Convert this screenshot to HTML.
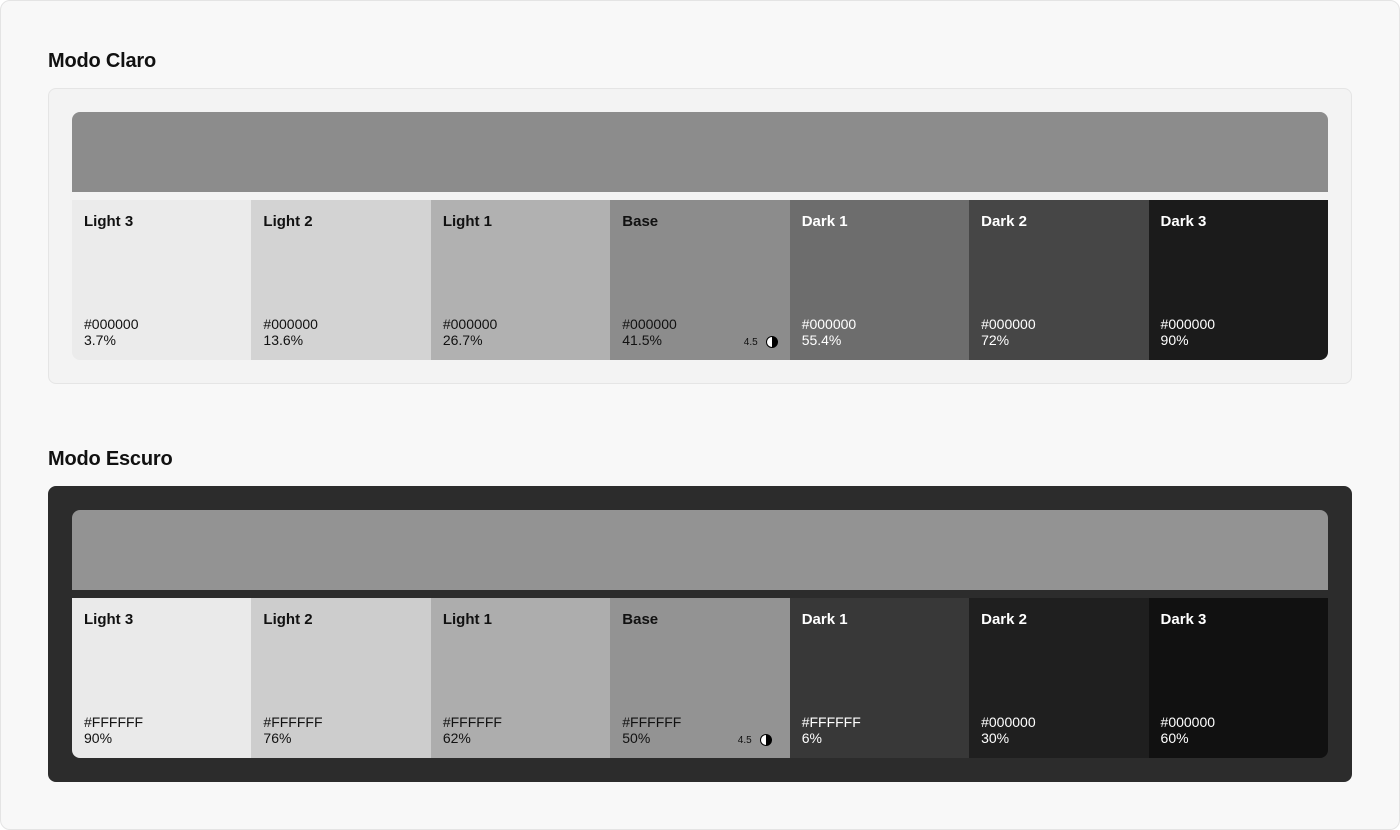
<!DOCTYPE html>
<html><head><meta charset="utf-8"><style>
*{box-sizing:border-box;margin:0;padding:0}
body{width:1400px;height:830px;background:#fff;font-family:"Liberation Sans",sans-serif;overflow:hidden;position:relative}
.frame{position:absolute;left:0;top:0;width:1400px;height:830px;background:#f8f8f8;border:1px solid #e4e4e4;border-radius:10px}
h2{position:absolute;left:48px;font-size:20px;font-weight:600;color:#111;letter-spacing:-0.2px}
.panel{position:absolute;left:48px;width:1304px;height:296px;border-radius:8px;padding:23px}
.light{top:88px;background:#f3f3f3;border:1px solid #e5e5e5}
.dark{top:486px;background:#2c2c2c;border:1px solid #2c2c2c}
.bar{height:80px;border-radius:8px 8px 0 0}
.row{display:flex;margin-top:8px;height:160px;border-radius:0 0 8px 8px;overflow:hidden}
.sw{flex:1;position:relative;padding:12px}
.lb{font-size:15px;font-weight:600;position:absolute;left:12px;top:13px}
.hx{position:absolute;left:12px;top:116px;font-size:14px;line-height:16px}
.ct{position:absolute;right:12px;top:136px;font-size:10px;display:flex;align-items:center;gap:8px}
.ic{width:12px;height:12px;border-radius:50%;border:1.5px solid #000;background:linear-gradient(90deg,#fff 50%,#000 50%)}
.w{color:#fff}.b{color:#111}
</style></head><body><div class="frame"></div>
<h2 style="top:50px">Modo Claro</h2>
<div class="panel light">
<div class="bar" style="background:#8c8c8c"></div>
<div class="row">
<div class="sw b" style="background:#ebebeb"><div class="lb">Light 3</div><div class="hx">#000000<br>3.7%</div></div>
<div class="sw b" style="background:#d3d3d3"><div class="lb">Light 2</div><div class="hx">#000000<br>13.6%</div></div>
<div class="sw b" style="background:#b1b1b1"><div class="lb">Light 1</div><div class="hx">#000000<br>26.7%</div></div>
<div class="sw b" style="background:#8c8c8c"><div class="lb">Base</div><div class="hx">#000000<br>41.5%</div><div class="ct">4.5 <span class="ic"></span></div></div>
<div class="sw w" style="background:#6d6d6d"><div class="lb">Dark 1</div><div class="hx">#000000<br>55.4%</div></div>
<div class="sw w" style="background:#464646"><div class="lb">Dark 2</div><div class="hx">#000000<br>72%</div></div>
<div class="sw w" style="background:#1b1b1b"><div class="lb">Dark 3</div><div class="hx">#000000<br>90%</div></div>
</div></div>
<h2 style="top:448px">Modo Escuro</h2>
<div class="panel dark">
<div class="bar" style="background:#939393"></div>
<div class="row">
<div class="sw b" style="background:#eaeaea"><div class="lb">Light 3</div><div class="hx">#FFFFFF<br>90%</div></div>
<div class="sw b" style="background:#cdcdcd"><div class="lb">Light 2</div><div class="hx">#FFFFFF<br>76%</div></div>
<div class="sw b" style="background:#adadad"><div class="lb">Light 1</div><div class="hx">#FFFFFF<br>62%</div></div>
<div class="sw b" style="background:#939393"><div class="lb">Base</div><div class="hx">#FFFFFF<br>50%</div><div class="ct" style="right:18px">4.5 <span class="ic"></span></div></div>
<div class="sw w" style="background:#383838"><div class="lb">Dark 1</div><div class="hx">#FFFFFF<br>6%</div></div>
<div class="sw w" style="background:#1f1f1f"><div class="lb">Dark 2</div><div class="hx">#000000<br>30%</div></div>
<div class="sw w" style="background:#111111"><div class="lb">Dark 3</div><div class="hx">#000000<br>60%</div></div>
</div></div>
</body></html>
